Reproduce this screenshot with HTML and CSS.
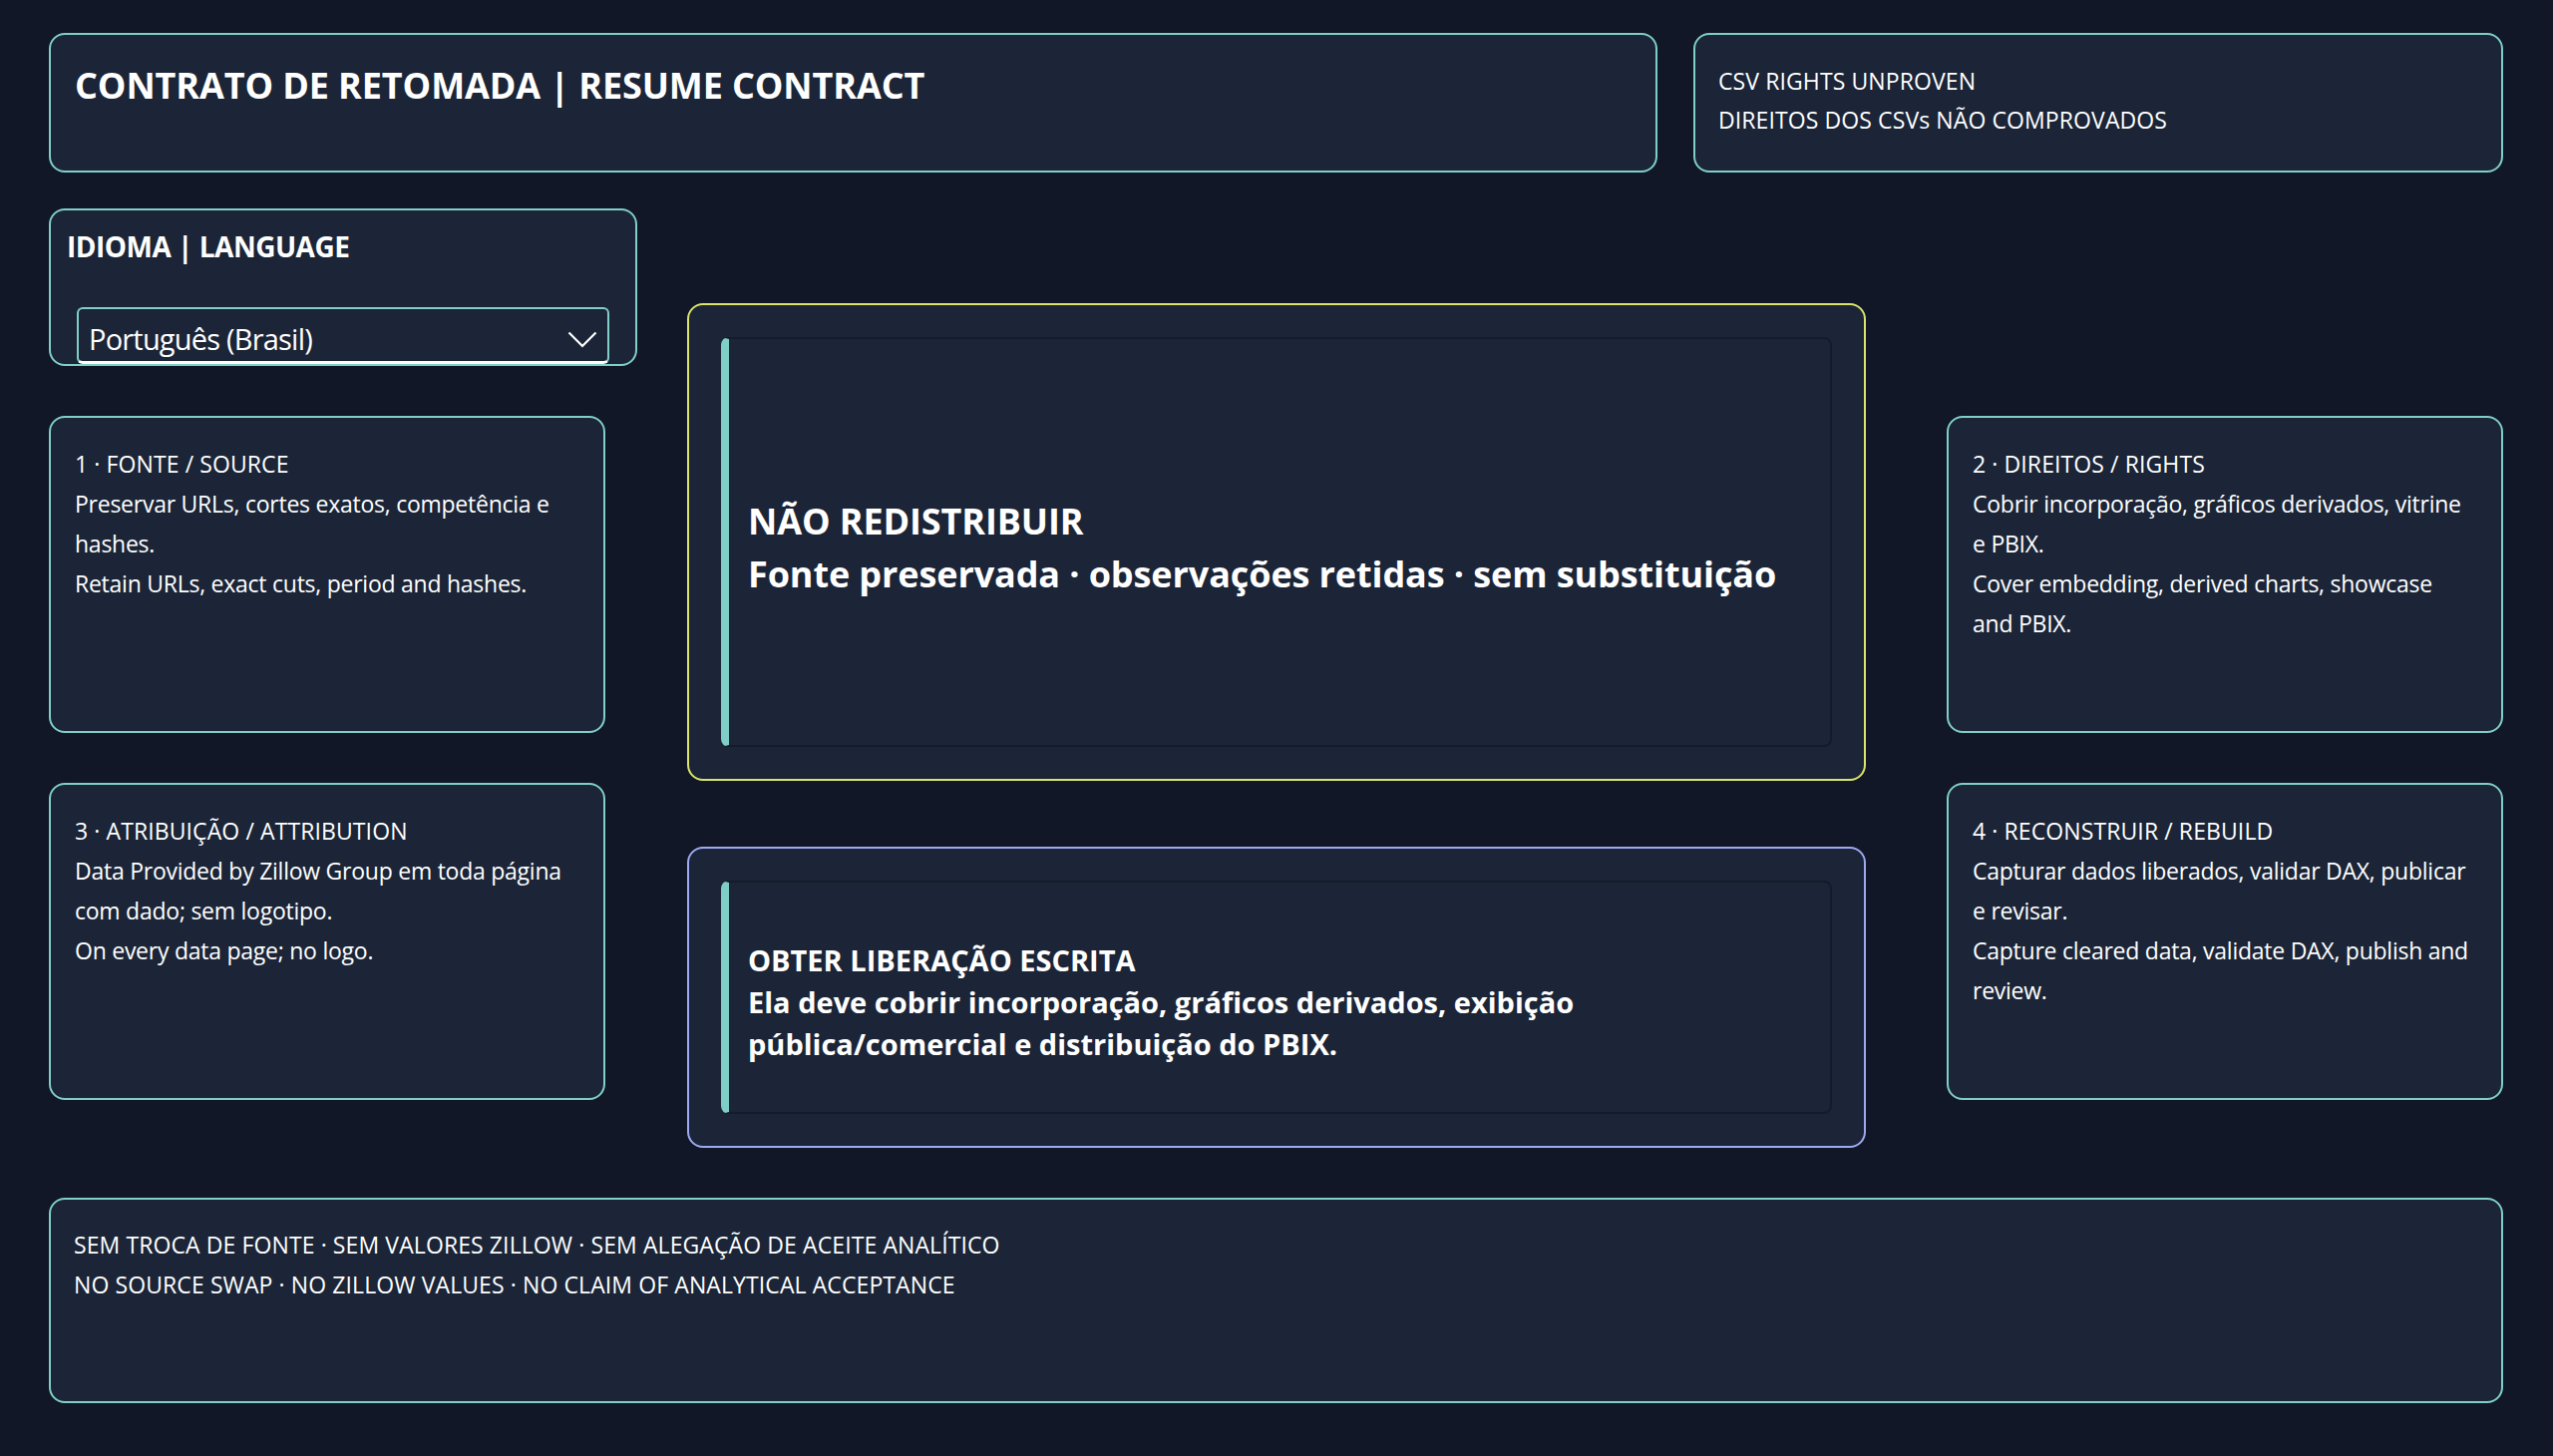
FILE: index.html
```html
<!DOCTYPE html>
<html lang="pt-BR">
<head>
<meta charset="utf-8">
<title>Contrato de retomada</title>
<link rel="stylesheet" href="styles.css">
</head>
<body>
<div class="page">
  <header class="top-row">
    <div class="panel title-panel">
      <h1 class="title">CONTRATO DE RETOMADA | RESUME CONTRACT</h1>
    </div>
    <div class="panel status-panel">
      <p class="line caps">CSV RIGHTS UNPROVEN</p>
      <p class="line caps">DIREITOS DOS CSVs NÃO COMPROVADOS</p>
    </div>
  </header>

  <main class="main-row">
    <div class="col col-left">
      <div class="panel lang-panel">
        <h2 class="lang-title">IDIOMA | LANGUAGE</h2>
        <div class="select">
          <span class="select-text">Português (Brasil)</span>
          <svg class="chevron" width="30" height="17" viewBox="0 0 30 17"><polyline points="1.5,1.5 15,15 28.5,1.5" fill="none" stroke="#ffffff" stroke-width="2.2"/></svg>
        </div>
      </div>
      <div class="panel card">
        <p class="line caps">1 · FONTE / SOURCE</p>
        <p class="line">Preservar URLs, cortes exatos, competência e hashes.</p>
        <p class="line">Retain URLs, exact cuts, period and hashes.</p>
      </div>
      <div class="panel card">
        <p class="line caps">3 · ATRIBUIÇÃO / ATTRIBUTION</p>
        <p class="line">Data Provided by Zillow Group em toda página com dado; sem logotipo.</p>
        <p class="line">On every data page; no logo.</p>
      </div>
    </div>

    <div class="col col-center">
      <div class="panel callout callout-warn">
        <div class="callout-inner">
          <div class="callout-text big">
            <p>NÃO REDISTRIBUIR</p>
            <p>Fonte preservada · observações retidas · sem substituição</p>
          </div>
        </div>
      </div>
      <div class="panel callout callout-info">
        <div class="callout-inner">
          <div class="callout-text mid">
            <p>OBTER LIBERAÇÃO ESCRITA</p>
            <p>Ela deve cobrir incorporação, gráficos derivados, exibição pública/comercial e distribuição do PBIX.</p>
          </div>
        </div>
      </div>
    </div>

    <div class="col col-right">
      <div class="panel card">
        <p class="line caps">2 · DIREITOS / RIGHTS</p>
        <p class="line">Cobrir incorporação, gráficos derivados, vitrine e PBIX.</p>
        <p class="line">Cover embedding, derived charts, showcase and PBIX.</p>
      </div>
      <div class="panel card">
        <p class="line caps">4 · RECONSTRUIR / REBUILD</p>
        <p class="line">Capturar dados liberados, validar DAX, publicar e revisar.</p>
        <p class="line">Capture cleared data, validate DAX, publish and review.</p>
      </div>
    </div>
  </main>

  <footer class="panel footer-panel">
    <p class="line caps">SEM TROCA DE FONTE · SEM VALORES ZILLOW · SEM ALEGAÇÃO DE ACEITE ANALÍTICO</p>
    <p class="line caps">NO SOURCE SWAP · NO ZILLOW VALUES · NO CLAIM OF ANALYTICAL ACCEPTANCE</p>
  </footer>
</div>
</body>
</html>
```

FILE: styles.css
```css
* {
  box-sizing: border-box;
}

html, body {
  margin: 0;
  padding: 0;
  background: #111726;
}

body {
  width: 2560px;
  height: 1460px;
  overflow: hidden;
  font-family: "Open Sans", "Noto Sans", "Liberation Sans", sans-serif;
  color: #ffffff;
}

p, h1, h2 {
  margin: 0;
}

.page {
  padding: 33px 50px 0 49px;
}

.panel {
  background: #1b2537;
  border: 2px solid #7fcfc6;
  border-radius: 16px;
}

.line {
  font-size: 23px;
  line-height: 40px;
  letter-spacing: -0.25px;
}

.line.caps {
  letter-spacing: 0.1px;
}

/* top row */
.top-row {
  display: grid;
  grid-template-columns: 1613fr 812fr;
  column-gap: 36px;
  height: 140px;
}

.title-panel {
  padding: 29px 24px 0 24px;
}

.title {
  font-size: 36px;
  line-height: 44px;
  font-weight: 700;
  letter-spacing: -0.1px;
}

.status-panel {
  padding: 27px 24px 0 23px;
}

.status-panel .line {
  line-height: 39px;
}

/* main */
.main-row {
  display: flex;
  margin-top: 36px;
  height: 942px;
}

.col {
  display: flex;
  flex-direction: column;
  align-items: flex-start;
}

.col-left {
  width: 590px;
  gap: 50px;
}

.col-center {
  width: 1182px;
  margin-left: 50px;
  padding-top: 95px;
  gap: 66px;
}

.col-right {
  width: 558px;
  margin-left: 81px;
  padding-top: 208px;
  gap: 50px;
}

.lang-panel {
  width: 590px;
  height: 158px;
  padding: 18px 0 0 16px;
  overflow: hidden;
}

.lang-title {
  font-size: 28px;
  line-height: 36px;
  font-weight: 700;
  letter-spacing: -0.5px;
}

.select {
  display: flex;
  align-items: center;
  justify-content: space-between;
  width: 534px;
  height: 57px;
  margin: 43px 0 0 10px;
  padding: 8px 10px 0 10px;
  border: 2px solid #7fcfc6;
  border-bottom: 3px solid #ffffff;
  border-radius: 6px;
}

.select-text {
  font-size: 29px;
  line-height: 40px;
  letter-spacing: -0.8px;
}

.chevron {
  display: block;
}

.card {
  width: 558px;
  height: 318px;
  padding: 26px 25px 0 24px;
}

/* callouts */
.callout {
  width: 1182px;
  padding: 32px 32px;
}

.callout-warn {
  height: 479px;
  border-color: #dae36c;
}

.callout-info {
  height: 302px;
  border-color: #9fa9f2;
}

.callout-inner {
  height: 100%;
  display: flex;
  align-items: center;
  padding: 10px 24px 0 19px;
  border: 2px solid #141b2a;
  border-left: 8px solid #7fcfc6;
  border-radius: 8px;
}

.callout-text {
  font-weight: 700;
}

.callout-text.big {
  font-size: 36px;
  line-height: 53px;
  letter-spacing: -0.1px;
}

.callout-text.mid {
  font-size: 29px;
  line-height: 42px;
  letter-spacing: 0;
}

/* footer */
.footer-panel {
  margin-top: 50px;
  height: 206px;
  padding: 25px 24px 0 23px;
}
```
